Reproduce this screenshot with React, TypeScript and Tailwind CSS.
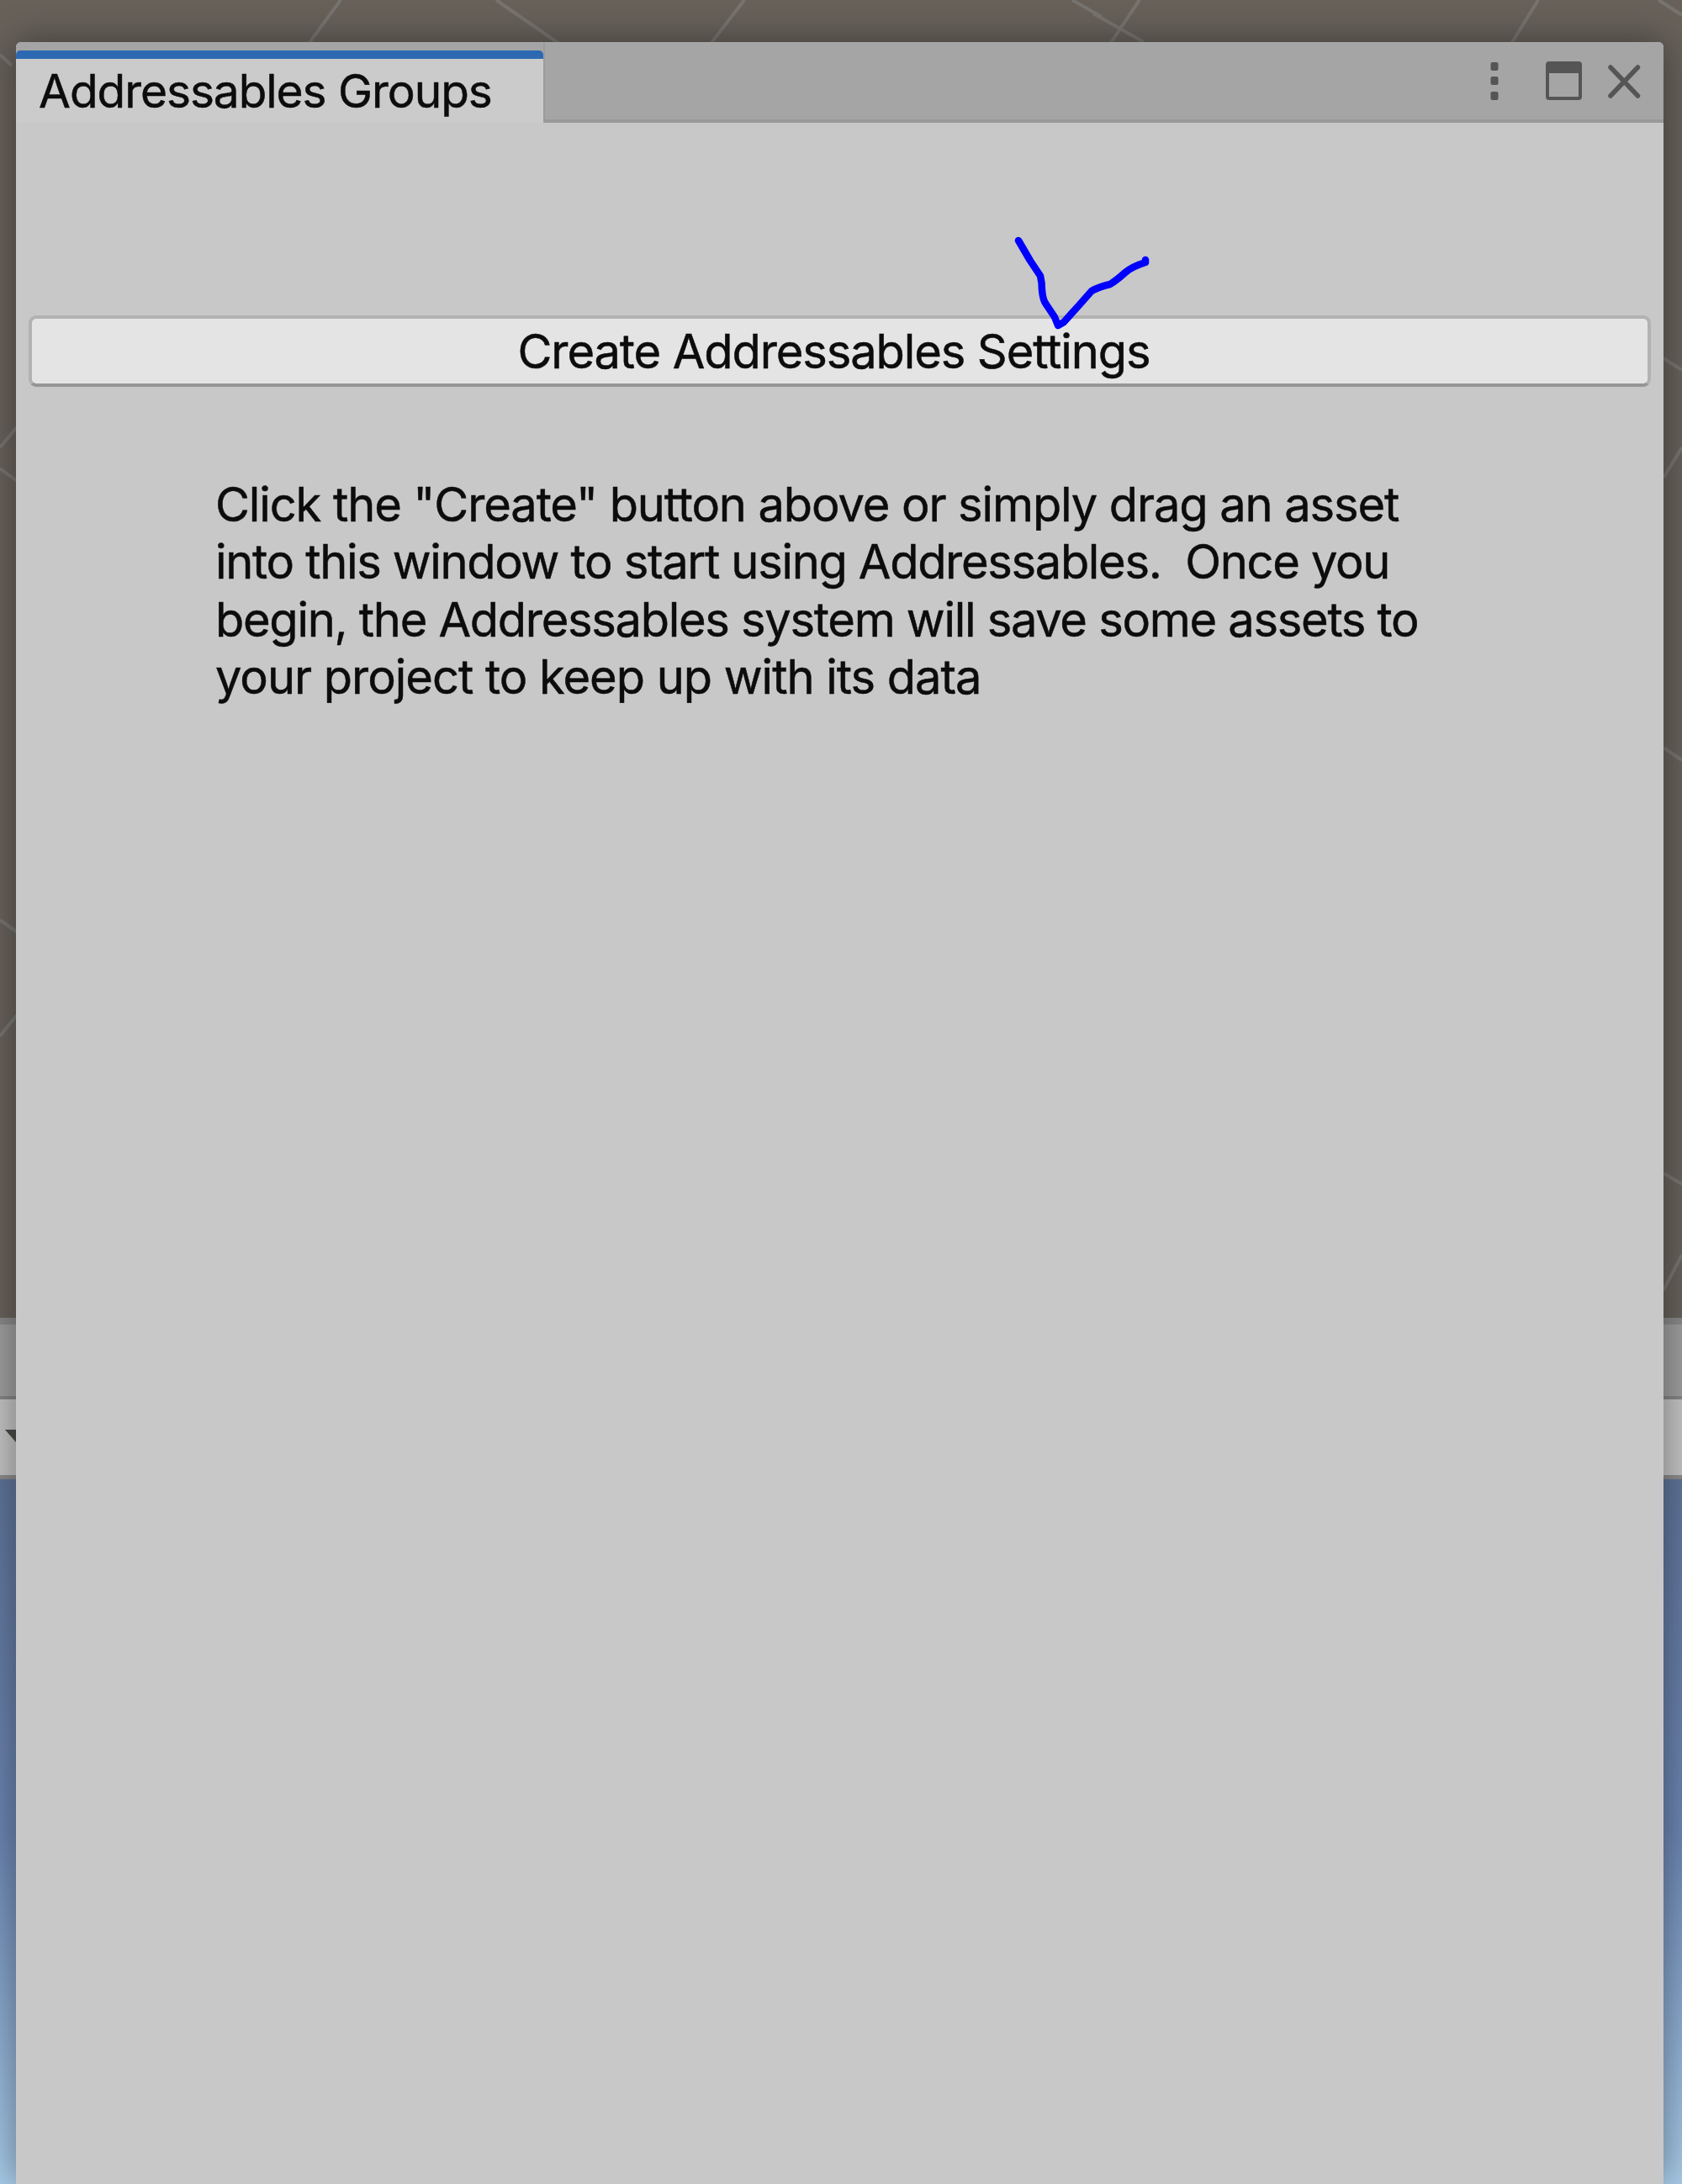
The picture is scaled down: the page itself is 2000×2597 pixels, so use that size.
import React from "react";

// Diagonal lines of the scene grid, visible around the floating window.
function SceneGrid() {
  return (
    <svg className="absolute inset-0" width="2000" height="1567" viewBox="0 0 2000 1567" fill="none" stroke="#77746f" strokeWidth="4">
      <path d="M405 0L367 52M590 0L665 52M885 0L845 52M1300 16L1360 50M1275 0L1310 20M1355 0L1320 52M1829 0L1797 52M1972 0L2000 18" />
      <path d="M0 65L14 78M0 532L20 508M0 557L20 572M0 1094L20 1108M0 1232L20 1207" />
      <path d="M1978 426L2000 440M1978 568L2000 532M1978 889L2000 904M1978 1395L2000 1408M1978 1534L2000 1492" />
    </svg>
  );
}

function Backdrop() {
  return (
    <div className="absolute inset-0 flex flex-col">
      <div className="relative h-[1567px] bg-[#67615a]">
        <SceneGrid />
      </div>
      <div className="h-[97px] border-t-8 border-b-4 border-t-[#888888] border-b-[#858585] bg-[#9d9d9d]" />
      <div className="h-[95px] border-b-[5px] border-[#8b8b8b] bg-[#c2c2c2]">
        <svg className="mt-[36px] ml-[6px]" width="26" height="15" viewBox="0 0 26 15">
          <path d="M0 0H26L13 15Z" fill="#4a4a46" />
        </svg>
      </div>
      <div className="flex-1 bg-linear-to-b from-[#5e7398] via-[#6b84b0] to-[#a8cbe8]" />
    </div>
  );
}

function WindowControls() {
  return (
    <svg width="190" height="60" viewBox="0 0 190 60" className="mt-[15px] mr-[21px]">
      <g fill="#555555">
        <rect x="5.500" y="9" width="9" height="10" rx="2" />
        <rect x="5.500" y="26" width="9" height="10" rx="2" />
        <rect x="5.500" y="44" width="9" height="10" rx="2" />
        <path fillRule="evenodd" d="M75 8H110Q114 8 114 12V50Q114 54 110 54H75Q71 54 71 50V12Q71 8 75 8ZM75 22V50H110V22Z" />
      </g>
      <path d="M148 15L180.500 49M180.500 15L148 49" stroke="#555555" strokeWidth="5.5" strokeLinecap="round" />
    </svg>
  );
}

function PenMark() {
  return (
    <svg className="absolute top-[225px] left-[1182px]" width="180" height="125" viewBox="1201 275 180 125" fill="none">
      <path
        d="M1211 286L1225 310L1237 328Q1239 336 1239 345Q1240 357 1244 362L1254 377L1258 387L1265 383L1283 363L1298 346Q1307 341 1320 338Q1328 333 1338 324Q1346 317 1362 312V309"
        stroke="#0000ff"
        strokeWidth="8.5"
        strokeLinecap="round"
        strokeLinejoin="round"
      />
    </svg>
  );
}

export default function App() {
  return (
    <div className="relative h-[2597px] w-[2000px] overflow-hidden bg-[#645f58] font-['Inter',sans-serif] text-[56px] text-[#0c0c0c] [-webkit-text-stroke:0.5px_#0c0c0c]">
      <Backdrop />
      <main className="relative mt-[50px] ml-[19px] flex h-[2547px] w-[1959px] flex-col rounded-t-[6px] bg-[#c8c8c8] shadow-[0_0_44px_rgba(0,0,0,0.4)]">
        <header className="flex h-[96px] items-start justify-between rounded-t-[6px] bg-[#a5a5a5] shadow-[inset_0_-4px_0_#999999]">
          <div className="h-[96px] w-[629px] overflow-hidden border-r-2 border-[#9b9b9b] pt-[10px]">
            <div className="h-[86px] overflow-hidden rounded-t-[5px] bg-[#cbcbcb]">
              <div className="h-[10px] bg-[#2c69b2]" />
              <h1 className="mt-[4px] pl-[27px] text-[55px] leading-[68px] tracking-[-1.05px] whitespace-nowrap">
                Addressables Groups
              </h1>
            </div>
          </div>
          <WindowControls />
        </header>
        <button className="mt-[229px] ml-[15px] flex h-[85px] w-[1929px] items-center justify-center rounded-[9px] border-4 border-[#b2b2b2] border-b-[#969696] bg-[#e4e4e4] pr-[14px] tracking-[-1.1px] whitespace-nowrap">
          Create Addressables Settings
        </button>
        <p className="mt-[106px] ml-[237px] flex flex-col leading-[68.4px] whitespace-pre">
          <span className="tracking-[-1.1px]">{'Click the "Create" button above or simply drag an asset'}</span>
          <span className="tracking-[-1.32px]">{"into this window to start using Addressables.  Once you"}</span>
          <span className="tracking-[-1.29px]">begin, the Addressables system will save some assets to</span>
          <span className="tracking-[-1.02px]">your project to keep up with its data</span>
        </p>
        <PenMark />
      </main>
    </div>
  );
}
